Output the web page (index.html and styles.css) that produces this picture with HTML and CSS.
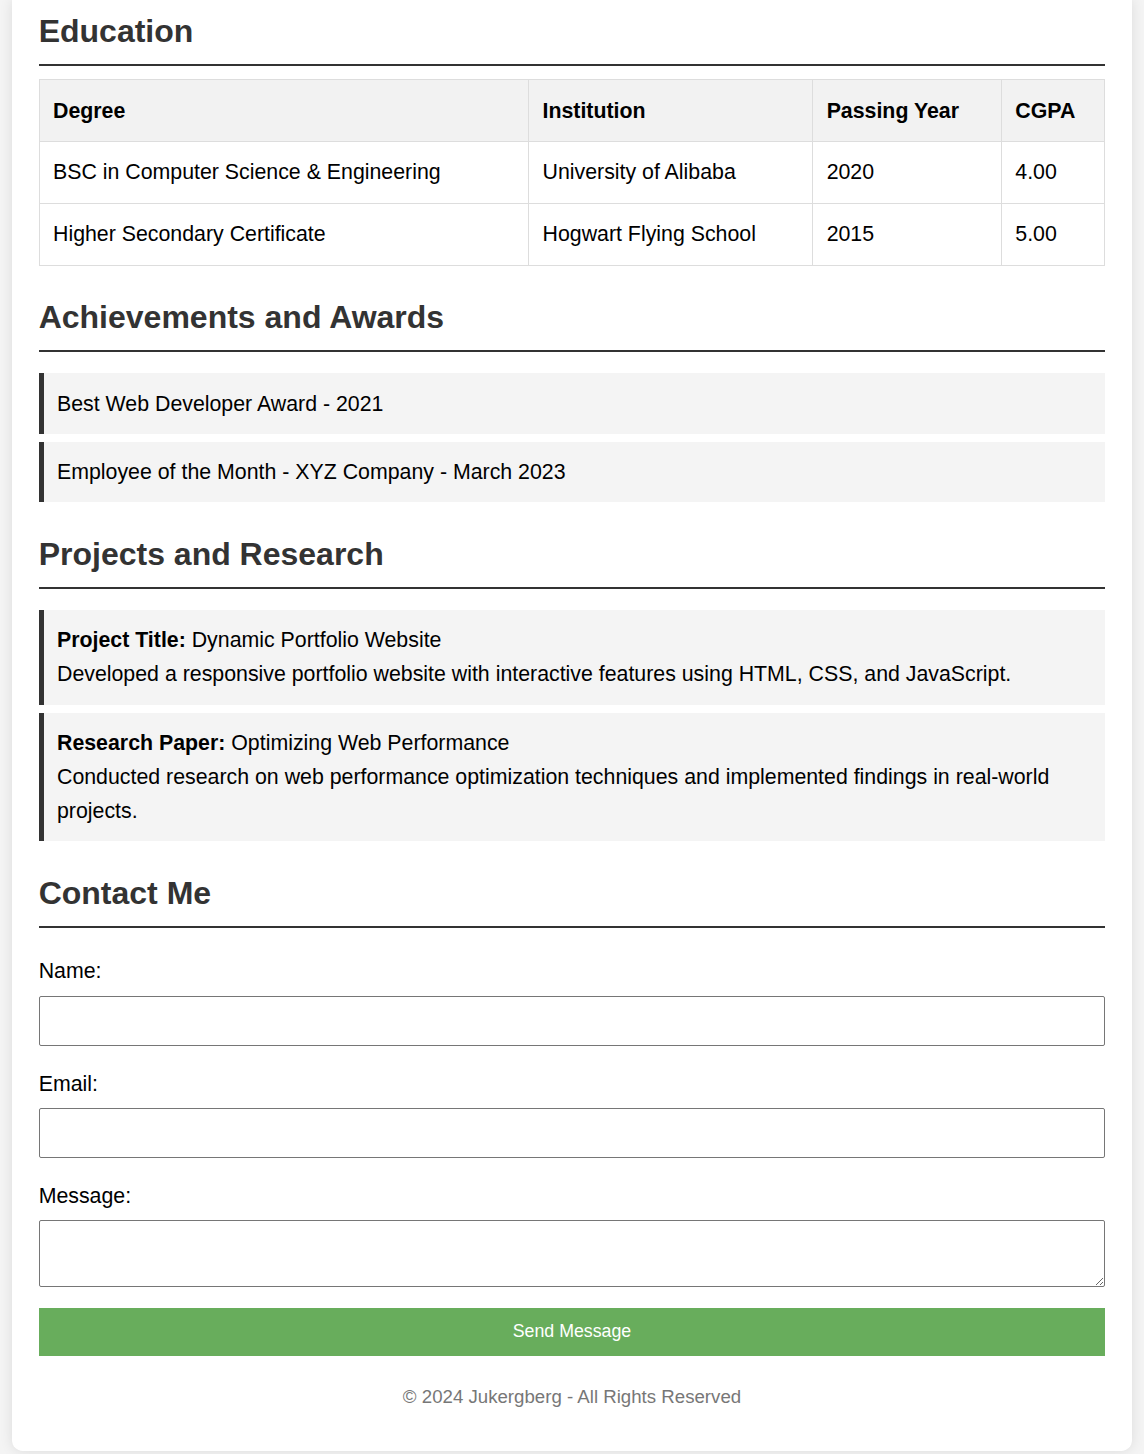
FILE: index.html
```html
<!DOCTYPE html>
<html lang="en">
<head>
<meta charset="utf-8">
<title>Portfolio</title>
<link rel="stylesheet" href="styles.css">
</head>
<body>
<div class="container">
  <section class="section">
    <h2 class="section-title first">Education</h2>
    <table class="edu-table">
      <thead>
        <tr><th>Degree</th><th>Institution</th><th>Passing Year</th><th>CGPA</th></tr>
      </thead>
      <tbody>
        <tr><td>BSC in Computer Science &amp; Engineering</td><td>University of Alibaba</td><td>2020</td><td>4.00</td></tr>
        <tr><td>Higher Secondary Certificate</td><td>Hogwart Flying School</td><td>2015</td><td>5.00</td></tr>
      </tbody>
    </table>
  </section>

  <section class="section">
    <h2 class="section-title">Achievements and Awards</h2>
    <ul class="item-list">
      <li class="item">Best Web Developer Award - 2021</li>
      <li class="item">Employee of the Month - XYZ Company - March 2023</li>
    </ul>
  </section>

  <section class="section">
    <h2 class="section-title">Projects and Research</h2>
    <ul class="item-list">
      <li class="item"><strong>Project Title:</strong> Dynamic Portfolio Website<br>Developed a responsive portfolio website with interactive features using HTML, CSS, and JavaScript.</li>
      <li class="item"><strong>Research Paper:</strong> Optimizing Web Performance<br>Conducted research on web performance optimization techniques and implemented findings in real-world projects.</li>
    </ul>
  </section>

  <section class="section">
    <h2 class="section-title">Contact Me</h2>
    <form class="contact-form">
      <label class="field-label" for="name">Name:</label>
      <input class="field-input" type="text" id="name">
      <label class="field-label" for="email">Email:</label>
      <input class="field-input" type="email" id="email">
      <label class="field-label" for="message">Message:</label>
      <textarea class="field-input field-textarea" id="message"></textarea>
      <button class="send-btn" type="button">Send Message</button>
    </form>
  </section>

  <footer class="footer">© 2024 Jukergberg - All Rights Reserved</footer>
</div>
</body>
</html>
```

FILE: styles.css
```css
* {
  box-sizing: border-box;
}

html, body {
  margin: 0;
  padding: 0;
}

body {
  background: #f4f4f4;
  font-family: "Liberation Sans", Arial, Helvetica, sans-serif;
  font-size: 21.33px;
  line-height: 1.6;
  color: #000;
}

.container {
  max-width: 1120px;
  margin: 0 auto 3px;
  background: #fff;
  padding: 1px 26.67px 39px;
  border-radius: 0 0 10.67px 10.67px;
  box-shadow: 0 0 13px rgba(0, 0, 0, 0.1);
}

.section-title {
  font-size: 32px;
  line-height: 51.2px;
  font-weight: bold;
  color: #333;
  margin: 26.67px 0 13.33px;
  padding-bottom: 6.67px;
  border-bottom: 2.67px solid #333;
}

.section-title.first {
  margin-top: 5px;
}

.edu-table {
  width: 100%;
  border-collapse: collapse;
}

.edu-table th,
.edu-table td {
  border: 1px solid #ddd;
  padding: 13.33px;
  text-align: left;
  line-height: 34.13px;
}

.edu-table th {
  background: #f2f2f2;
  font-weight: bold;
}

.item-list {
  list-style: none;
  margin: 21.33px 0;
  padding: 0;
}

.item {
  background: #f4f4f4;
  border-left: 5.33px solid #333;
  padding: 13.15px 13.33px;
  margin-bottom: 8px;
}

.contact-form {
  margin-top: 26.67px;
}

.field-label {
  display: block;
  line-height: 34.13px;
  margin-bottom: 7.33px;
}

.field-input {
  display: block;
  width: 100%;
  height: 50px;
  margin: 0 0 20.67px;
  border: 1.33px solid #767676;
  border-radius: 2px;
  background: #fff;
  font-family: inherit;
  font-size: 17.78px;
  padding: 4px 8px;
}

.field-textarea {
  height: 67.3px;
  resize: both;
}

.send-btn {
  display: block;
  width: 100%;
  height: 47.7px;
  border: none;
  border-radius: 0;
  background: #68ad5c;
  color: #fff;
  font-family: inherit;
  font-size: 17.78px;
  cursor: pointer;
}

.footer {
  margin-top: 26.67px;
  text-align: center;
  color: #777;
  font-size: 18.67px;
  line-height: 29.87px;
}
```
